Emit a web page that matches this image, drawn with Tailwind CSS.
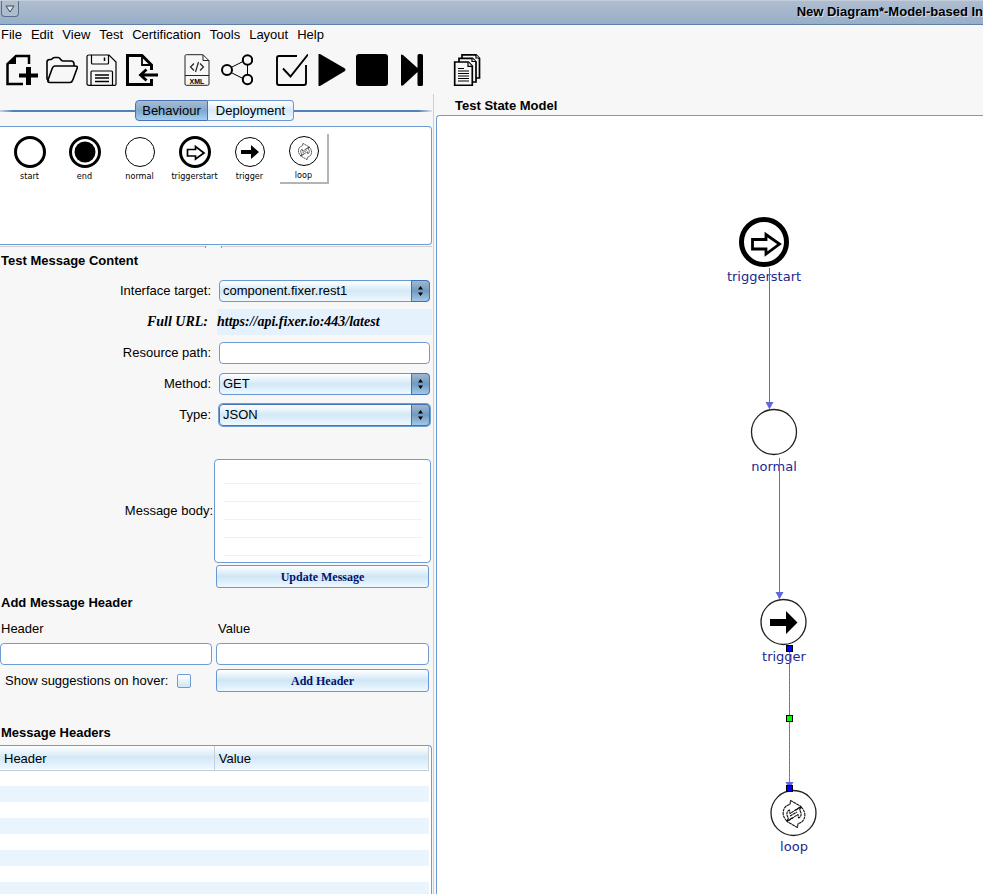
<!DOCTYPE html>
<html lang="en">
<head>
<meta charset="utf-8">
<title>New Diagram*-Model-based In</title>
<script src="https://cdn.jsdelivr.net/npm/@tailwindcss/browser@4"></script>
</head>
<body class="flex h-screen flex-col overflow-hidden bg-[#f7f7f7] font-['Liberation_Sans',sans-serif] text-[13px] leading-4 text-black">

<svg class="hidden" aria-hidden="true">
  <symbol id="loop" viewBox="0 0 24 28">
    <g fill="none" stroke="#111" stroke-width="1.100" stroke-linejoin="round" stroke-dasharray="3 .5">
      <path id="half" d="M5 21C-1 16 0 6 8 4.500L8.500.500 19 6.500 8 13.500 7.500 10C4.500 11 4 15 6.500 18L5 21z"/>
      <use href="#half" transform="rotate(180 12 14)"/>
      <path d="M5 21l6-3.500M19 7l-6 3.500M8 16l7-4"/>
    </g>
  </symbol>
</svg>

<header class="flex h-[25px] shrink-0 items-start justify-between border-t border-b border-t-[#c3ceda] border-b-[#5f80a8] bg-linear-to-b from-[#afbdcf] to-[#98aec8]">
  <button aria-label="Window menu" class="ml-px flex h-4 w-[18px] items-center justify-center rounded-b border border-t-0 border-[#5b6e88] bg-[#aebdce]">
    <svg class="h-[8px] w-[10px]" viewBox="0 0 10 8"><path d="M1 1h8L5 7z" fill="#dde4ec" stroke="#3a4656"/></svg>
  </button>
  <h1 class="pt-[3px] font-bold whitespace-nowrap [text-shadow:1px_1px_0_#d5deea]">New Diagram*-Model-based In</h1>
</header>

<nav class="flex shrink-0 gap-[9px] px-px pt-[2px] text-[13px]">
  <button>File</button><button>Edit</button><button>View</button><button>Test</button><button>Certification</button><button>Tools</button><button>Layout</button><button>Help</button>
</nav>

<div class="flex shrink-0 gap-[23px] px-[6px] pt-[11px] pb-2">
  <div class="flex gap-2">
    <button aria-label="New" class="size-8"><svg viewBox="0 0 32 32"><path d="M23 10V2H10L1.500 10V30H17" fill="none" stroke="#000" stroke-width="2.500"/><path d="M10 1v9H1z"/><path d="M20 13h5v6.500h7v4h-7V31h-5v-7.500h-7v-4h7z"/></svg></button>
    <button aria-label="Open" class="size-8"><svg viewBox="0 0 32 32" fill="none" stroke="#000" stroke-width="1.600" stroke-linejoin="round"><path d="M3 27 1 25V8c0-2 1-2.500 3-2.500h1C7 5 6 3.500 9 3.500h3c3 0 2 3.500 5 3.500h8c2 0 3 1 3 3v2"/><path d="M9 12h20c2 0 3 .5 2 2.500l-4 11c-.7 2-1.300 3-3 3H4c-2 0-2.500-1-2-2.500L6 15c.7-2 1.200-3 3-3z"/></svg></button>
    <button aria-label="Save" class="size-8"><svg viewBox="0 0 32 32" fill="none" stroke="#000" stroke-width="1.200"><path d="M3 1h20l7 7v22c0 .7-.5 1.300-1.300 1.300H3c-1 0-2-.5-2-1.500V2.500C1 1.500 2 1 3 1z"/><path d="M5.500 1v8c0 .7.500 1 1 1h15c.6 0 1-.4 1-1V1M5 31V18c0-.6.400-1 1-1h19.500c.6 0 1 .4 1 1v13"/><path d="M18.500 3.500v3.500" stroke-width="1.500"/><path d="M9 21h14M9 24h14M9 27.500h14" stroke-width="1.500"/></svg></button>
    <button aria-label="Import" class="size-8"><svg viewBox="0 0 32 32" fill="none" stroke="#000"><path d="M25.500 16V11L16 1.500H1.500v29h24V25" stroke-width="3"/><path d="M16 2v9h9" stroke-width="1.800"/><path d="M32 21H14M20.500 15.500 14.500 21l6 5.500" stroke-width="2.800"/></svg></button>
  </div>
  <div class="flex gap-2">
    <button aria-label="XML" class="size-8"><svg viewBox="0 0 32 32" fill="none" stroke="#222"><path d="M5.500.7H22l6 6V30c0 .8-.6 1.300-1.300 1.300H5.300c-.8 0-1.300-.5-1.300-1.300V2c0-.8.600-1.300 1.500-1.300zM22 1v5.500h6M4 21.500h24"/><path d="M13 9.500 9.500 13l3.500 3.500M19 9.500l3.500 3.500-3.500 3.500M17.500 8l-3 10" stroke-width="1.200"/><text x="16" y="29.500" font-family="Liberation Sans" font-size="7" text-anchor="middle" fill="#000" stroke="none" font-weight="bold">XML</text></svg></button>
    <button aria-label="Share" class="size-8"><svg viewBox="0 0 32 32" fill="none" stroke="#000"><path d="M10 13.500 22 7.500M10 18.500l12 6M26.500 11v10" stroke-width="1"/><g stroke-width="2"><circle cx="6" cy="16" r="5"/><circle cx="26.500" cy="6" r="4.700"/><circle cx="26.500" cy="25.500" r="4.700"/></g></svg></button>
  </div>
  <div class="flex gap-2">
    <button aria-label="Validate" class="size-8"><svg viewBox="0 0 32 32" fill="none" stroke="#000"><path d="M21 2H3C1.500 2 1 2.700 1 4v25c0 1.300.7 2 2 2h25c1.300 0 2-.7 2-2V11" stroke-width="1.900"/><path d="M7 14.500l7.500 8L32 .5" stroke-width="1.900"/></svg></button>
    <button aria-label="Run" class="size-8"><svg viewBox="0 0 32 32"><path d="M2.500 0 4 0 29 14.500q1 1.500 0 2.500L4 32H2.500z"/></svg></button>
    <button aria-label="Stop" class="size-8"><svg viewBox="0 0 32 32"><rect width="32" height="32" rx="3"/></svg></button>
    <button aria-label="Step" class="size-8"><svg viewBox="0 0 32 32"><path d="M5 .5 7 1 21.500 14V1.500Q21.500 0 23 0h2.500Q27 0 27 1.500v29q0 1.500-1.500 1.500H23q-1.500 0-1.500-1.500V18L7 31.500H5z"/></svg></button>
  </div>
  <div class="flex gap-2">
    <button aria-label="Reports" class="size-8"><svg viewBox="0 0 32 32" fill="#f7f7f7" stroke="#000" stroke-width="1.700"><path d="M11 .8h14l3.500 3.500V24H11z"/><path d="M8 4.300h13.500L25 7.800V28H8z"/><path d="M3.700 8h13.600l4 4v19.300H3.700z"/><path d="M17 8v4.300h4M21 4.500v3h4M25 1v3h3.500" stroke-width="1.200"/><path d="M7 14.500h6M7 17h11M7 19.500h11M7 22h11M7 24.500h11M7 27h11" stroke-width="1.200"/></svg></button>
  </div>
</div>

<main class="flex min-h-0 flex-1">
  <aside class="flex w-[434px] shrink-0 flex-col overflow-hidden border-r border-[#cfcfcf] pr-px">
    <div class="flex items-center pt-[6px]">
      <div class="h-[2px] w-[135px] bg-linear-to-r from-[#c5d5e8] via-[#5580b5] via-10% to-[#5580b5]"></div>
      <button class="h-[21px] w-[73px] rounded-l-[4px] border border-[#4474bd] bg-linear-to-b from-[#aabccf] via-[#7fa8cc] to-[#a4cfee]">Behaviour</button>
      <button class="h-[21px] w-[86px] rounded-r-[4px] border border-l-0 border-[#6a98d4] bg-linear-to-b from-white via-[#d5e9f8] to-[#eef8ff]">Deployment</button>
      <div class="h-[2px] flex-1 bg-linear-to-r from-[#5580b5] via-[#5580b5] via-90% to-[#dce5ef]"></div>
    </div>

    <div class="mt-[5px] flex h-[119px] shrink-0 items-start rounded-r-[4px] border border-l-0 border-[#6f9bd3] bg-white pt-[7px] pl-[2px] font-['DejaVu_Sans_Condensed','DejaVu_Sans',sans-serif] text-[9px] leading-[14px]">
      <button class="flex w-[55px] flex-col items-center pt-[2px]"><svg class="size-8" viewBox="0 0 32 32"><circle cx="16" cy="16" r="14.500" fill="#fff" stroke="#000" stroke-width="3"/></svg><span class="pt-px">start</span></button>
      <button class="flex w-[55px] flex-col items-center pt-[2px]"><svg class="size-8" viewBox="0 0 32 32"><circle cx="16" cy="16" r="14.500" fill="#fff" stroke="#000" stroke-width="3"/><circle cx="16" cy="16" r="10.500"/></svg><span class="pt-px">end</span></button>
      <button class="flex w-[55px] flex-col items-center pt-[2px]"><svg class="size-8" viewBox="0 0 32 32"><circle cx="16" cy="16" r="14.500" fill="#fff" stroke="#000"/></svg><span class="pt-px">normal</span></button>
      <button class="flex w-[55px] flex-col items-center pt-[2px]"><svg class="size-8" viewBox="0 0 32 32"><circle cx="16" cy="16" r="14.500" fill="#fff" stroke="#000" stroke-width="3"/><path d="M8.500 13.500h8v-3L25 17l-8.500 6v-3h-8z" fill="none" stroke="#000" stroke-width="1.700"/></svg><span class="pt-px">triggerstart</span></button>
      <button class="flex w-[55px] flex-col items-center pt-[2px]"><svg class="size-8" viewBox="0 0 32 32"><circle cx="16" cy="16" r="14.500" fill="#fff" stroke="#000"/><path d="M7 14h10V9l8 7-8 7v-5H7z"/></svg><span class="pt-px">trigger</span></button>
      <button class="ml-[3px] flex h-[50px] w-[49px] flex-col items-center border-r-2 border-b-2 border-[#b4b4b4] pt-px"><svg class="size-8" viewBox="0 0 32 32"><circle cx="16" cy="16" r="14.500" fill="#fff" stroke="#000"/><use href="#loop" x="9" y="8" width="16" height="17"/></svg><span class="pt-px">loop</span></button>
    </div>
    <div class="mt-px flex h-[2px] shrink-0 justify-center border-t border-[#cfcfcf] pr-[5px]"><span class="-mt-px h-[2px] w-[17px] border-x border-[#6f9bd3] bg-[#eef8ff]"></span></div>

    <h2 class="pt-[5px] pl-px font-bold">Test Message Content</h2>

    <form class="flex flex-col">
      <div class="mt-[11px] flex flex-col gap-[9px] pr-[2px]">
        <div class="grid grid-cols-[211px_1fr] items-center gap-2">
          <label for="target" class="text-right">Interface target:</label>
          <div class="relative"><select id="target" class="block h-[22px] w-full appearance-none rounded-[4px] border border-[#6a98d4] bg-linear-to-b from-white via-[#d3e8f7] to-[#eef8ff] px-[3px]"><option>component.fixer.rest1</option></select>
          <svg class="pointer-events-none absolute top-0 right-0 h-[22px] w-[19px]" viewBox="0 0 19 22"><use href="#stepper"/></svg></div>
        </div>
        <div class="-my-[2px] grid grid-cols-[208px_1fr] items-center gap-[9px] font-['Liberation_Serif',serif] text-[14px] font-bold italic">
          <span class="text-right">Full URL:</span>
          <output class="-mr-[2px] block bg-[#e6f1fe] py-[5px]">https://api.fixer.io:443/latest</output>
        </div>
        <div class="grid grid-cols-[211px_1fr] items-center gap-2">
          <label for="path" class="text-right">Resource path:</label>
          <input id="path" class="h-[22px] w-full rounded-[4px] border border-[#6f9bd3] bg-white px-[3px]">
        </div>
        <div class="grid grid-cols-[211px_1fr] items-center gap-2">
          <label for="method" class="text-right">Method:</label>
          <div class="relative"><select id="method" class="block h-[22px] w-full appearance-none rounded-[4px] border border-[#6a98d4] bg-linear-to-b from-white via-[#d3e8f7] to-[#eef8ff] px-[3px]"><option>GET</option></select>
          <svg class="pointer-events-none absolute top-0 right-0 h-[22px] w-[19px]" viewBox="0 0 19 22"><use href="#stepper"/></svg></div>
        </div>
        <div class="grid grid-cols-[211px_1fr] items-center gap-2">
          <label for="type" class="text-right">Type:</label>
          <div class="relative"><select id="type" class="block h-[22px] w-full appearance-none rounded-[4px] border border-[#4474bd] bg-linear-to-b from-white via-[#d3e8f7] to-[#eef8ff] px-[3px] ring-1 ring-[#6f9fd0]"><option>JSON</option></select>
          <svg class="pointer-events-none absolute top-0 right-0 h-[22px] w-[19px]" viewBox="0 0 19 22"><use href="#stepper"/></svg></div>
        </div>
      </div>

      <div class="mt-[33px] grid grid-cols-[213px_1fr] items-center gap-px pr-px">
        <label for="body" class="text-right">Message body:</label>
        <div class="rounded-[4px] border border-[#6f9bd3] bg-white px-2 pt-[6px] pb-[5px]">
          <textarea id="body" class="block h-[91px] w-full resize-none bg-[repeating-linear-gradient(to_bottom,transparent_0_17px,#e8f3fb_17px_18px)] leading-[18px]"></textarea>
        </div>
      </div>
      <button type="button" class="mt-[2px] mr-[3px] ml-[216px] h-[23px] rounded-[3px] border border-[#6a98d4] bg-linear-to-b from-white via-[#cfe6f5] to-[#eef8ff] font-['Liberation_Serif',serif] text-[12px] font-bold text-[#00146b]">Update Message</button>
    </form>

    <h2 class="pt-[7px] pl-px font-bold">Add Message Header</h2>
    <form class="grid grid-cols-[212px_1fr] gap-x-[4px] gap-y-[4px] pt-[10px] pr-[3px]">
      <label for="hname" class="pb-[2px] pl-px">Header</label>
      <label for="hvalue" class="pb-[2px] pl-[2px]">Value</label>
      <input id="hname" class="h-[22px] w-full rounded-[4px] border border-[#6f9bd3] bg-white px-1">
      <input id="hvalue" class="h-[22px] w-full rounded-[4px] border border-[#6f9bd3] bg-white px-1">
      <div class="flex items-center gap-[9px] pl-[5px]">
        <label for="hover">Show suggestions on hover:</label>
        <input id="hover" type="checkbox" class="size-[14px] appearance-none rounded-[2px] border border-[#6f9bd3] bg-linear-to-b from-white to-[#cfe6f5]">
      </div>
      <button type="button" class="h-[23px] rounded-[3px] border border-[#6a98d4] bg-linear-to-b from-white via-[#cfe6f5] to-[#eef8ff] font-['Liberation_Serif',serif] text-[12px] font-bold text-[#00146b]">Add Header</button>
    </form>

    <h2 class="pt-[33px] pl-px font-bold">Message Headers</h2>
    <div class="mt-[4px] min-h-0 flex-1 overflow-hidden rounded-tr-[4px] border-t border-r border-[#6f9bd3] bg-white pr-[2px]">
      <table class="w-full table-fixed border-collapse">
        <thead><tr class="h-6 border-b border-[#c5cfda] bg-linear-to-b from-white via-[#d3e8f7] to-[#eef8ff] text-left">
          <th class="border-r border-[#c5cfda] pt-[2px] pl-1 font-normal">Header</th>
          <th class="border-r border-[#c5cfda] pt-[2px] pl-1 font-normal">Value</th>
        </tr></thead>
        <tbody class="[&>tr]:h-4 [&>tr:nth-child(even)]:bg-[#e9f4fc]">
          <tr><td></td><td></td></tr><tr><td></td><td></td></tr><tr><td></td><td></td></tr><tr><td></td><td></td></tr>
          <tr><td></td><td></td></tr><tr><td></td><td></td></tr><tr><td></td><td></td></tr><tr><td></td><td></td></tr>
        </tbody>
      </table>
    </div>
  </aside>

  <section class="ml-[2px] flex min-w-0 flex-1 flex-col">
    <h2 class="pt-[4px] pb-px pl-[19px] font-bold">Test State Model</h2>
    <div class="relative min-h-0 flex-1 overflow-hidden rounded-tl-[4px] border-t border-l border-[#6f9bd3] bg-white">
      <svg class="absolute top-0 left-0 h-[778px] w-[546px]" viewBox="437 116 546 778" role="img" aria-label="State diagram">
        <g fill="none" stroke="#000">
          <circle cx="764" cy="242" r="22.500" stroke-width="5"/>
          <path d="M752.500 239.500h13.500v-5l13.500 9.500-13.500 10v-5h-13.500z" stroke-width="2.800"/>
          <circle cx="774" cy="432" r="22.500" stroke="#222" stroke-width="1.300"/>
          <circle cx="783.500" cy="622" r="22.500" stroke="#222" stroke-width="1.300"/>
          <path d="M770 619h16v-8l11.500 11.500L786 634v-8h-16z" fill="#000" stroke="none"/>
          <circle cx="793.500" cy="813" r="22.500" stroke="#222" stroke-width="1.300"/>
        </g>
        <use href="#loop" x="782" y="800" width="24" height="28"/>
        <g fill="#202890" font-family="DejaVu Sans" font-size="13" text-anchor="middle">
          <text x="764" y="281">triggerstart</text>
          <text x="774" y="471">normal</text>
          <text x="784" y="661">trigger</text>
          <text x="794" y="851">loop</text>
        </g>
        <g stroke="#6068dc" fill="none"><path d="M769.500 268v136M779.500 458v136M789.500 648v140"/><path d="M789.500 648v140" stroke="#00e000" stroke-dasharray="2 2"/></g>
        <path d="M765.500 402h8l-4 7.500zM775.500 592h8l-4 7.500zM785.500 782h8l-4 7.500z" fill="#6068dc"/>
        <g stroke="#000"><rect x="786.500" y="645.500" width="6" height="6" fill="#00f"/><rect x="786.500" y="715.500" width="6" height="6" fill="#0f0"/><rect x="786.500" y="785.500" width="6" height="6" fill="#00f"/></g>
      </svg>
    </div>
  </section>
</main>

<svg class="absolute size-0" aria-hidden="true">
  <defs>
    <linearGradient id="knob" x2="0" y2="1"><stop offset="0" stop-color="#a3b9cf"/><stop offset=".5" stop-color="#6f9ac0"/><stop offset="1" stop-color="#a6cbe8"/></linearGradient>
    <symbol id="stepper" viewBox="0 0 19 22"><path d="M.5.500H15q3.500 0 3.500 3.500v14q0 3.500-3.500 3.500H.5z" fill="url(#knob)" stroke="#3e72b4"/><path d="M9.500 6 12 9.500H7zM9.500 16 7 12.500h5z"/></symbol>
  </defs>
</svg>
</body>
</html>
